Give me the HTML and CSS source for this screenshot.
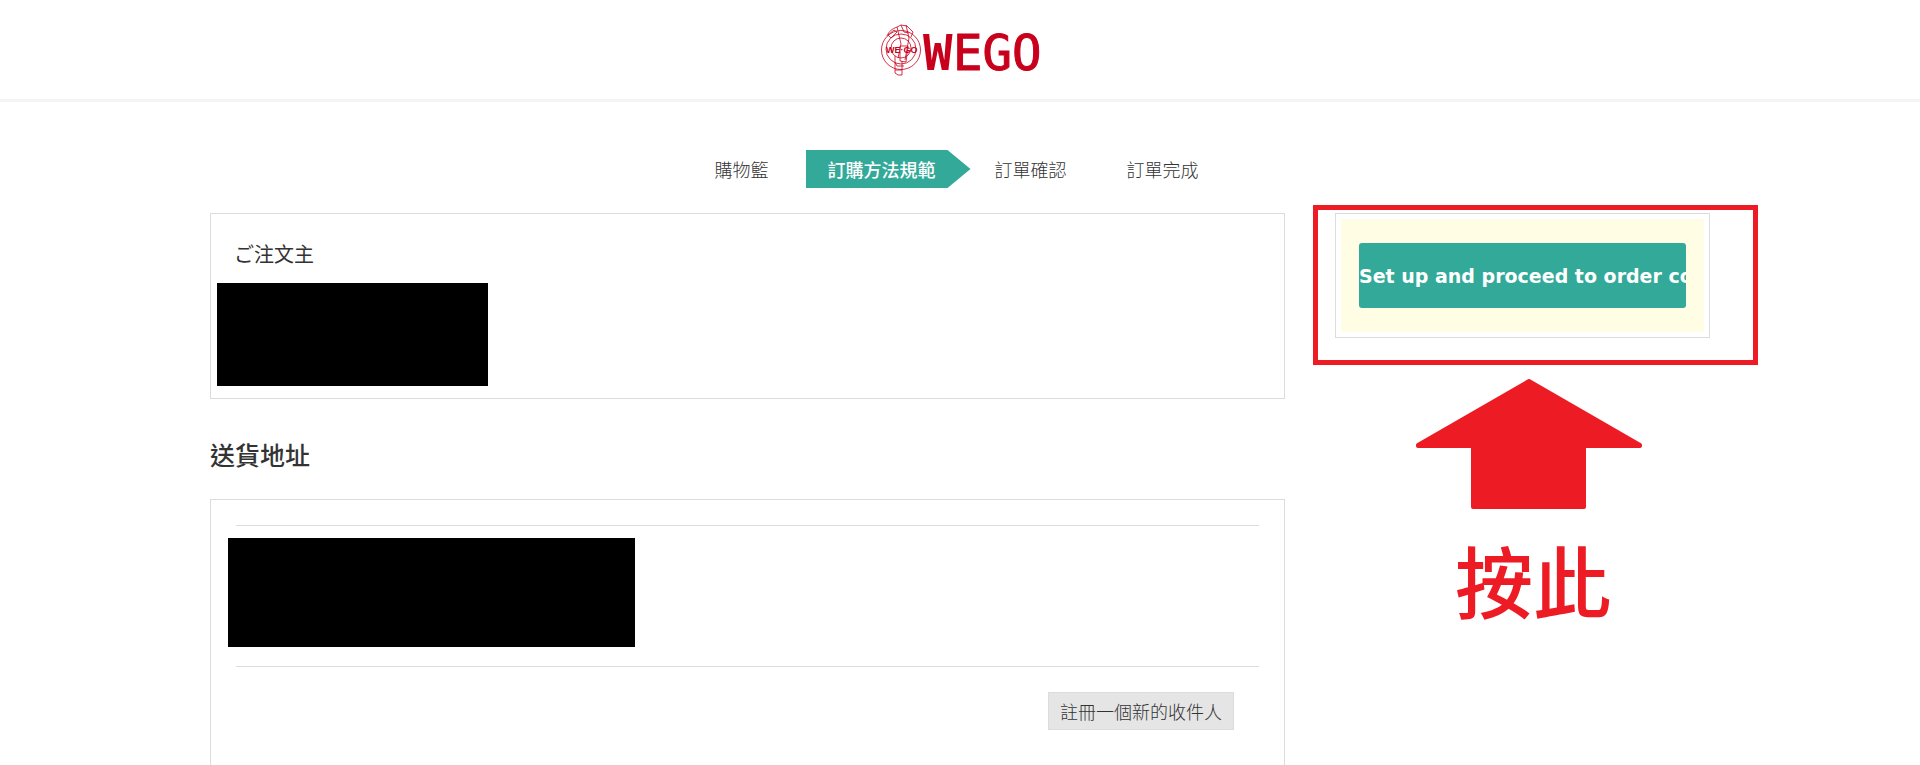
FILE: index.html
```
<!DOCTYPE html>
<html lang="zh-Hant">
<head>
  <meta charset="UTF-8">
  <meta name="viewport" content="width=device-width, initial-scale=1.0">
  <title>WEGO</title>
  <link rel="stylesheet" href="styles.css">
</head>
<body>
  <header class="header">
    <a href="#" class="logo" aria-label="WEGO">
      <svg width="164" height="80" viewBox="-2 -12 164 80">
        <g fill="none" stroke="#c8001c" stroke-width="0.8">
          <circle cx="21" cy="28" r="19.5"/>
          <circle cx="21" cy="27" r="15"/>
          <circle cx="21" cy="26" r="10"/>
          <path d="M7 14c2-5 5-7 10-9l4-2 6 1 6 6-2 5M8 13l6-5 3 2-6 6zM17 5l4 17-3 14M26 3l3 13-4 22M21 3l3 7 5 1M20 24h8l-2 16-6-1zM15 40l2 4h7M15 34v17l3 2h4V39M15 48h7"/>
        </g>
        <text class="logo-mark" x="6" y="31">WE·GO</text>
        <text class="logo-w" x="43" y="48">W</text>
        <text class="logo-text" x="73" y="48">EGO</text>
      </svg>
    </a>
  </header>

  <ol class="steps">
    <li>購物籃</li>
    <li class="active">訂購方法規範</li>
    <li>訂單確認</li>
    <li>訂單完成</li>
  </ol>

  <div class="container">
    <main class="main">
      <section class="card orderer">
        <h3>ご注文主</h3>
        <div class="mask"></div>
      </section>

      <h2>送貨地址</h2>

      <section class="card address">
        <div class="address-row">
          <div class="mask"></div>
        </div>
        <button type="button" class="new-address">註冊一個新的收件人</button>
      </section>
    </main>

    <aside class="side">
      <div class="card submit-card">
        <div class="submit-area">
          <button type="submit" class="submit">Set up and proceed to order confirmation</button>
        </div>
      </div>
      <div class="highlight"></div>
      <div class="guide">
        <svg width="228" height="130" viewBox="0 0 228 130">
          <path d="M114 2L225 66v1H169v61H58V67H3v-1z" fill="#ed1c24" stroke="#ed1c24" stroke-width="4" stroke-linejoin="round"/>
        </svg>
        <p>按此</p>
      </div>
    </aside>
  </div>
</body>
</html>
```

FILE: styles.css
```
* {
  box-sizing: border-box;
}
body {
  margin: 0;
  background-color: #fff;
  color: #333;
  font-family: "DejaVu Sans", "Noto Sans CJK TC", sans-serif;
  font-size: 18px;
}
h2, h3, p, ol {
  margin: 0;
}
button {
  font-family: inherit;
  cursor: pointer;
}
.header {
  display: flex;
  justify-content: center;
  align-items: center;
  height: 102px;
  border-bottom: 3px solid #f4f4f4;
}
.logo {
  display: block;
  height: 80px;
}
.logo text {
  fill: #c8001c;
}
.logo-mark {
  font: bold 9px "Liberation Sans", sans-serif;
}
.logo-w {
  font: bold 49px "DejaVu Sans Mono", monospace;
}
.logo-text {
  font: 49px "DejaVu Sans Mono", monospace;
  stroke: #c8001c;
  stroke-width: 1px;
}

/* order steps */
.steps {
  display: flex;
  justify-content: center;
  padding: 48px 0 25px;
  list-style: none;
  font-family: "Noto Sans CJK TC", sans-serif;
  font-weight: 300;
  line-height: 38px;
}
.steps li {
  padding: 0 30px;
}
.steps li:first-child {
  padding: 0 37px 0 0;
}
.steps li:last-child {
  padding-right: 7px;
}
.steps .active {
  padding: 0 35px 0 22px;
  margin-right: -6px;
  background-color: #33a999;
  color: #fff;
  font-weight: 500;
  clip-path: polygon(0 0, calc(100% - 23px) 0, 100% 50%, calc(100% - 23px) 100%, 0 100%);
}

.container {
  display: flex;
  gap: 50px;
  max-width: 1500px;
  margin: 0 auto;
}
.main {
  flex: 1;
}
.card {
  border: 1px solid #dcdcdc;
}
.mask {
  background-color: #000;
}
h2 {
  padding: 42px 0 32px;
  font-family: "Noto Sans CJK TC", sans-serif;
  font-size: 25px;
  font-weight: 500;
  line-height: 26px;
}
.orderer {
  padding: 25px 6px 12px;
}
.orderer h3 {
  padding: 0 17px;
  font-family: "Noto Sans CJK JP", sans-serif;
  font-size: 20px;
  font-weight: 400;
  line-height: 30px;
}
.orderer .mask {
  max-width: 271px;
  height: 103px;
  margin-top: 14px;
}
.address {
  padding: 25px 25px 60px;
}
.address-row {
  padding: 12px 0 19px;
  border-top: 1px solid #dcdcdc;
  border-bottom: 1px solid #dcdcdc;
}
.address-row .mask {
  max-width: 407px;
  height: 109px;
  margin-left: -8px;
}
.new-address {
  display: block;
  height: 38px;
  margin: 25px 25px 0 auto;
  padding: 0 11px;
  border: 1px solid #dcdcdc;
  background-color: #e5e5e5;
  color: #333;
  font-family: "Noto Sans CJK TC", sans-serif;
  font-size: 18px;
  font-weight: 300;
  line-height: 34px;
}

/* submit box */
.side {
  position: relative;
  width: 375px;
}
.submit-card {
  padding: 5px;
}
.submit-area {
  padding: 24px 18px;
  background-color: #fffde3;
}
.submit {
  display: block;
  width: 100%;
  height: 65px;
  padding: 0;
  border: none;
  border-radius: 3px;
  background-color: #33a999;
  color: #fff;
  font-size: 19px;
  font-weight: bold;
  text-align: left;
  white-space: nowrap;
  overflow: hidden;
}
.highlight {
  position: absolute;
  top: -8px;
  left: -22px;
  width: 445px;
  height: 160px;
  border: 5px solid #ed1c24;
  pointer-events: none;
}
.guide {
  padding: 41px 0 0 12px;
  text-align: center;
}
.guide svg {
  display: block;
  margin: 0 auto;
}
.guide p {
  padding: 20px 0 0 9px;
  color: #ed1c24;
  font-family: "Noto Sans CJK TC", sans-serif;
  font-size: 78px;
  font-weight: 500;
  line-height: 100px;
}
```
